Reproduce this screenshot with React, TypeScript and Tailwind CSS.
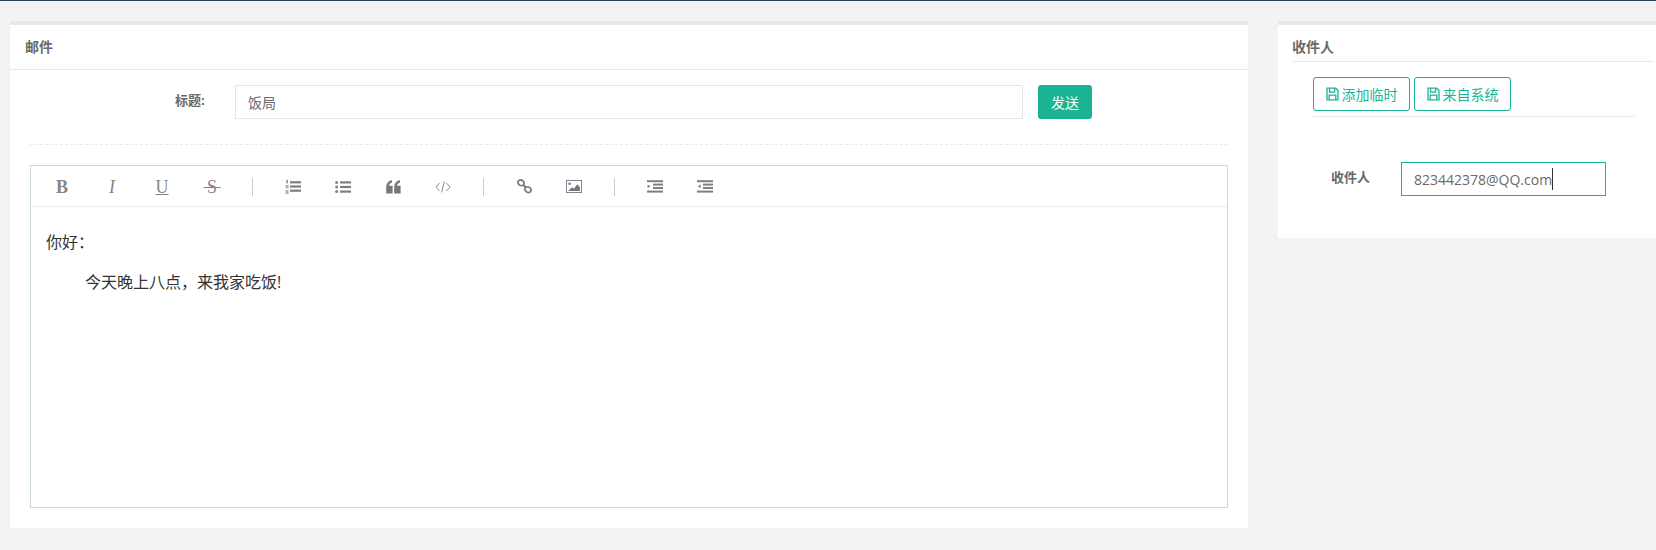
import React from "react";

const sans = "font-['Open_Sans','Noto_Sans_CJK_SC',sans-serif]";

function SaveIcon() {
  return (
    <svg width="13" height="14" viewBox="0 0 13 14" fill="none" stroke="#1ab394" strokeWidth="1.3" className="shrink-0">
      <path d="M1 1.2h8.6l2.4 2.4v9.2H1z" />
      <path d="M3.6 1.2v3.9h5V1.2M3.2 12.8V8.2h6.6v4.6" />
    </svg>
  );
}

function Glyph({ className, children }: { className: string; children: React.ReactNode }) {
  return <span className={`font-['Liberation_Serif',serif] text-[18px] leading-none text-[#858585] ${className}`}>{children}</span>;
}

const c = "#7f7f7f";

function Ol() {
  return (
    <svg width="16" height="16" viewBox="0 0 16 16" fill={c}>
      <rect x="5" y="2.2" width="11" height="2.2" />
      <rect x="5" y="6.4" width="11" height="2.2" />
      <rect x="5" y="10.6" width="11" height="2.2" />
      <rect x="1.4" y="0.8" width="1.4" height="3.6" />
      <rect x="0.6" y="6" width="3" height="3.4" opacity="0.6" />
      <rect x="0.6" y="11" width="3" height="4" opacity="0.6" />
    </svg>
  );
}

function Ul() {
  return (
    <svg width="16" height="14" viewBox="0 0 16 14" fill={c}>
      <circle cx="1.6" cy="2.4" r="1.5" />
      <circle cx="1.6" cy="7" r="1.5" />
      <circle cx="1.6" cy="11.6" r="1.5" />
      <rect x="5" y="1.3" width="11" height="2.2" />
      <rect x="5" y="5.9" width="11" height="2.2" />
      <rect x="5" y="10.5" width="11" height="2.2" />
    </svg>
  );
}

function Quote() {
  return (
    <svg width="15" height="14" viewBox="0 0 15 14" fill="#777">
      <path d="M0.2 7.6C0.2 3.4 2 0.9 6 0.2v2.2C4.2 3 3.2 4 3.1 5.8H6.6v7.8H0.2z" />
      <path d="M8.2 7.6C8.2 3.4 10 0.9 14 0.2v2.2C12.2 3 11.2 4 11.1 5.8h3.5v7.8H8.2z" />
    </svg>
  );
}

function Code() {
  return (
    <svg width="16" height="12" viewBox="0 0 16 12" fill="none" stroke="#8a8a8a" strokeWidth="1">
      <path d="M4.6 2 0.9 6l3.7 4M11.4 2l3.7 4-3.7 4M9.3 0.6 6.7 11.4" />
    </svg>
  );
}

function Link() {
  return (
    <svg width="15" height="15" viewBox="0 0 15 15" fill="none" stroke="#7a7a7a" strokeWidth="1.7">
      <ellipse cx="4" cy="3.8" rx="3.1" ry="2.7" transform="rotate(40 4 3.8)" />
      <ellipse cx="11" cy="10.6" rx="3.1" ry="2.7" transform="rotate(40 11 10.6)" />
      <path d="M6.4 6 8.6 8.2" strokeWidth="2.2" />
    </svg>
  );
}

function Picture() {
  return (
    <svg width="16" height="13" viewBox="0 0 16 13">
      <rect x="0.5" y="0.5" width="15" height="12" fill="#fff" stroke="#8f7f96" />
      <circle cx="3.6" cy="3.8" r="1.3" fill="#777" />
      <path d="M2 11 6 7.2l1.8 1.6 3.6-4.6L14 7.2V11z" fill="#777" />
    </svg>
  );
}

function Indent({ flip }: { flip?: boolean }) {
  return (
    <svg width="16" height="13" viewBox="0 0 16 13" fill={c}>
      <rect x="0" y="0.2" width="16" height="2" />
      <rect x="6" y="3.6" width="10" height="2" />
      <rect x="6" y="7" width="10" height="2" />
      <rect x="0" y="10.6" width="16" height="2" />
      {flip ? <path d="M3.6 4.4v3.8L0.8 6.3z" /> : <path d="M0.6 4.4v3.8l2.8-1.9z" />}
    </svg>
  );
}

function Tool({ children }: { children: React.ReactNode }) {
  return <div className="w-[50px] h-full flex items-center justify-center">{children}</div>;
}

function Sep() {
  return <div className="w-px h-[18px] mx-[15px] bg-[#cccccc]" />;
}

function OutlineButton({ label, width }: { label: string; width: string }) {
  return (
    <button className={`${width} h-[34px] flex items-center justify-center gap-[3px] bg-white border border-[#1ab394] rounded-[3px] text-[14px] text-[#1ab394]`}>
      <SaveIcon />
      <span>{label}</span>
    </button>
  );
}

export default function App() {
  return (
    <div className={`h-[550px] overflow-hidden bg-[#f3f3f4] text-[#676a6c] ${sans}`}>
      <div className="h-px bg-[#2f4050]" />
      <div className="flex items-start pt-5 pl-[10px] gap-[30px]">
        <section className="w-[1238px] bg-white border-t-4 border-[#e7eaec]">
          <div className="h-[45px] px-[15px] flex items-center border-b border-[#e7eaec]">
            <h5 className="text-[14px] font-bold leading-none">邮件</h5>
          </div>
          <div className="px-5 pt-[15px] pb-5">
            <div className="flex items-start pl-[145px] h-[34px]">
              <label className="w-[60px] text-[13px] font-bold leading-[20px] pt-[5px]">标题:</label>
              <div className="w-[788px] h-[34px] border border-[#e5e6e7] px-3 flex items-center text-[14px]">饭局</div>
              <button className="ml-[15px] w-[54px] h-[34px] bg-[#1ab394] rounded-[3px] text-white text-[14px]">发送</button>
            </div>
            <div className="mt-[25px] mb-5 border-t border-dashed border-[#e7eaec]" />
            <div className="h-[343px] flex flex-col border border-[#c9d8db]">
              <div className="h-[41px] shrink-0 pl-[6px] pt-[1px] flex items-center border-b border-[#eeeeee]">
                <Tool><Glyph className="font-bold">B</Glyph></Tool>
                <Tool><Glyph className="italic">I</Glyph></Tool>
                <Tool><Glyph className="underline">U</Glyph></Tool>
                <Tool><Glyph className="line-through">{"\u2009S\u2009"}</Glyph></Tool>
                <Sep />
                <Tool><Ol /></Tool>
                <Tool><Ul /></Tool>
                <Tool><Quote /></Tool>
                <Tool><Code /></Tool>
                <Sep />
                <Tool><Link /></Tool>
                <Tool><Picture /></Tool>
                <Sep />
                <Tool><Indent /></Tool>
                <Tool><Indent flip /></Tool>
              </div>
              <div className="px-[15px] pt-[23px] text-[16px] leading-[24px] text-[#333333]">
                <p>你好：</p>
                <p className="mt-4 pl-[39px]">今天晚上八点，来我家吃饭!</p>
              </div>
            </div>
          </div>
        </section>

        <aside className="flex-1 h-[217px] bg-white border-t-4 border-[#e7eaec]">
          <div className="ml-[15px] mr-[2px] h-[37px] pt-2 flex items-center border-b border-[#e7eaec]">
            <h5 className="-ml-px text-[14px] font-bold leading-none">收件人</h5>
          </div>
          <div className="ml-[35px] w-[322px] mt-[15px] pb-[5px] flex gap-1 border-b border-[#e7eaec]">
            <OutlineButton label="添加临时" width="w-[97px]" />
            <OutlineButton label="来自系统" width="w-[97px]" />
          </div>
          <div className="mt-[45px] ml-[53px] flex items-start">
            <label className="w-[70px] text-[13px] font-bold leading-[30px]">收件人</label>
            <div className="w-[205px] h-[34px] border border-[#1ab394] pl-3 flex items-center text-[14px]">
              <span>823442378@QQ.com</span>
              <span className="w-px h-[22px] bg-[#333333]" />
            </div>
          </div>
        </aside>
      </div>
    </div>
  );
}
